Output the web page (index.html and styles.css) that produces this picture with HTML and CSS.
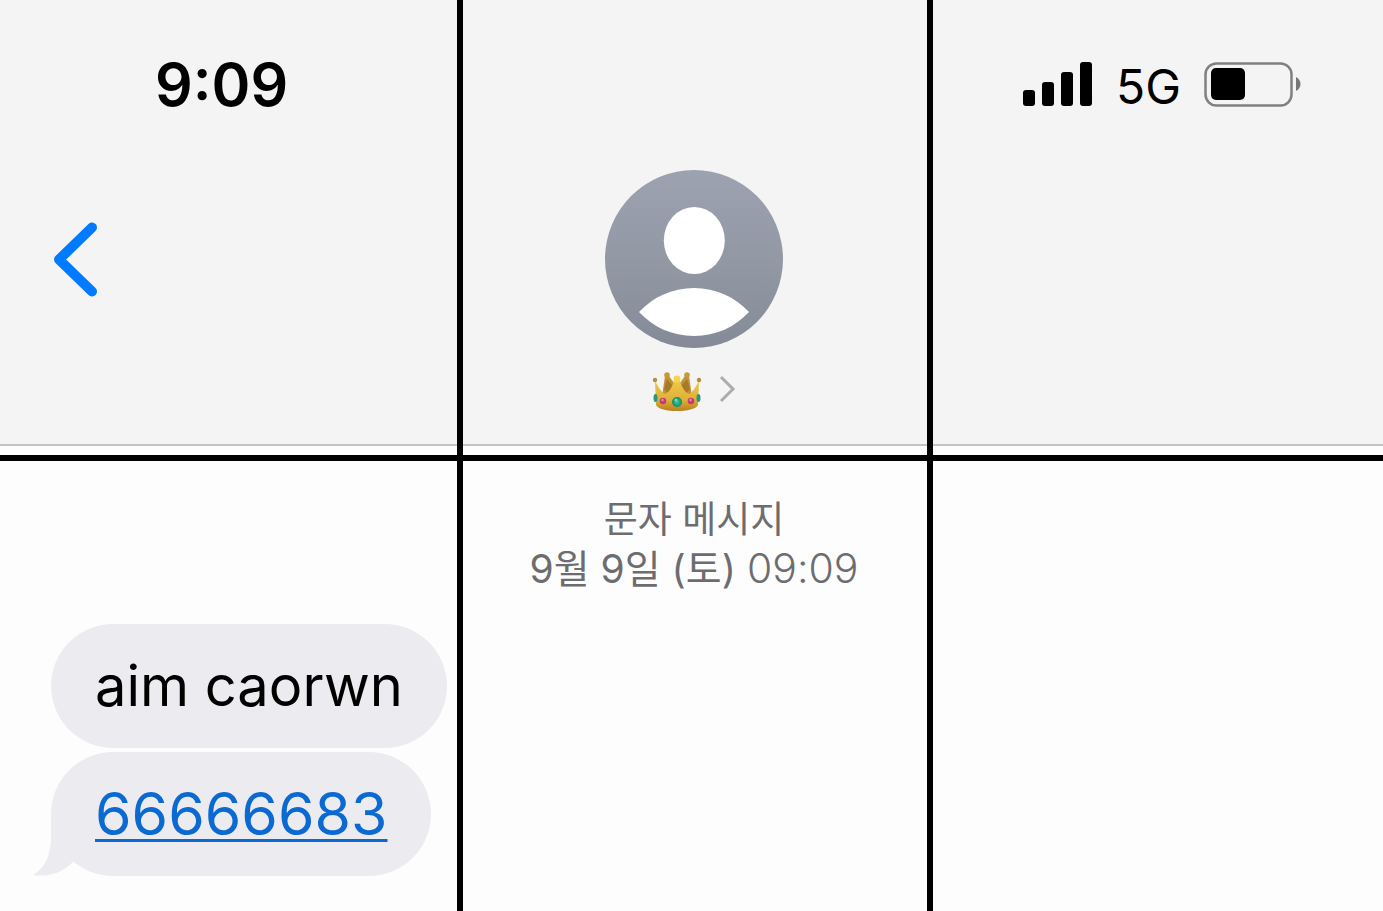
FILE: index.html
```html
<!DOCTYPE html>
<html lang="ko">
<head>
<meta charset="utf-8">
<meta name="viewport" content="width=device-width, initial-scale=1">
<title>문자 메시지</title>
<link rel="stylesheet" href="styles.css">
</head>
<body>
<main class="grid">
  <section class="cell cell-top">
    <div class="bar bar-left">
      <time class="clock">9:09</time>
      <button class="back" type="button" aria-label="뒤로">
        <svg width="46" height="76" viewBox="0 0 46 76" aria-hidden="true"><path d="M40 6.500L7 38.500L40 70.500" fill="none" stroke="#007aff" stroke-width="10" stroke-linecap="round" stroke-linejoin="round"/></svg>
      </button>
    </div>
  </section>

  <section class="cell cell-top">
    <div class="bar bar-center">
      <svg class="avatar" width="178" height="178" viewBox="0 0 178 178" aria-hidden="true">
        <defs><linearGradient id="av" x1="0" y1="0" x2="0" y2="1"><stop offset="0" stop-color="#9da2b1"/><stop offset=".5" stop-color="#9298a4"/><stop offset=".8" stop-color="#8a919c"/><stop offset="1" stop-color="#858998"/></linearGradient></defs>
        <circle cx="89" cy="89" r="89" fill="url(#av)"/>
        <ellipse cx="89.300" cy="70.500" rx="30.500" ry="33.500" fill="#fff"/>
        <path d="M34 142C48 127 67 118 89 118C111 118 130 127 144 142C130 157 111 166 89 166C67 166 48 157 34 142Z" fill="#fff"/>
      </svg>
      <button class="contact" type="button" aria-label="연락처 정보">
        <svg width="50" height="42" viewBox="0 0 50 42" aria-hidden="true">
          <defs>
            <linearGradient id="gold" x1="0" y1="0" x2="0" y2="1"><stop offset="0" stop-color="#f0cb45"/><stop offset=".65" stop-color="#dfb03a"/><stop offset="1" stop-color="#b8801f"/></linearGradient>
            <radialGradient id="green"><stop offset="0" stop-color="#43c79a"/><stop offset="1" stop-color="#11895f"/></radialGradient>
          </defs>
          <path d="M9 32L13 5H17L25 16L33 5H37L41 32Z" fill="#c2943a"/>
          <path d="M12 18L15 8L22 16L17 24Z M38 18L35 8L28 16L33 24Z" fill="#a87a28"/>
          <circle cx="15" cy="4" r="2.800" fill="#c79a38"/><circle cx="35" cy="4" r="2.800" fill="#c79a38"/>
          <path d="M3 10C7 17 10 22 13 23C18 21 21 14 23 8H27C29 14 32 21 37 23C40 22 43 17 47 10L46 34C44 38 35 40 25 40C15 40 6 38 4 34Z" fill="url(#gold)"/>
          <circle cx="3" cy="9" r="2.200" fill="#bb8d35"/><circle cx="47" cy="9" r="2.200" fill="#bb8d35"/>
          <circle cx="25" cy="8" r="3.400" fill="#f5d44a"/>
          <ellipse cx="3.500" cy="27" rx="2" ry="4" fill="#249c72"/><ellipse cx="46.500" cy="27" rx="2" ry="4" fill="#249c72"/>
          <circle cx="11" cy="30" r="3.300" fill="#c43b72"/><circle cx="39" cy="30" r="3.300" fill="#c43b72"/>
          <circle cx="10.500" cy="29" r="1.200" fill="#ef8caf"/><circle cx="38.500" cy="29" r="1.200" fill="#ef8caf"/>
          <circle cx="25" cy="31" r="5" fill="url(#green)"/><circle cx="24" cy="29" r="1.500" fill="#79dbbb"/>
        </svg>
        <svg width="18" height="34" viewBox="0 0 18 34" aria-hidden="true"><path d="M3 2L15 14L3 26" fill="none" stroke="#acacae" stroke-width="3"/></svg>
      </button>
    </div>
  </section>

  <section class="cell cell-top">
    <div class="bar bar-right">
      <svg width="70" height="44" viewBox="0 0 70 44" role="img" aria-label="신호"><rect x="0" y="28" width="12" height="16" rx="3"/><rect x="19" y="20" width="12" height="24" rx="3"/><rect x="38" y="10" width="12" height="34" rx="3"/><rect x="57" y="0" width="12" height="44" rx="3"/></svg>
      <span class="network">5G</span>
      <svg width="98" height="46" viewBox="0 0 98 46" role="img" aria-label="배터리"><rect x="1.500" y="1.500" width="86" height="42" rx="11" fill="none" stroke="#808080" stroke-width="2.500"/><rect x="7" y="6" width="34" height="32" rx="5"/><path d="M92 15C98 18 98 26 92 29Z" fill="#777"/></svg>
    </div>
  </section>

  <section class="cell chat">
    <p class="bubble">aim caorwn</p>
    <p class="bubble bubble-last"><a class="number" href="tel:66666683">66666683</a>
      <svg class="tail" width="60" height="64" viewBox="0 0 60 64" aria-hidden="true"><path d="M18 0V22C18 43 13 55 0 63C14 65 28 62 40 50L60 0Z" fill="#ecebf0"/></svg>
    </p>
  </section>

  <section class="cell stamp">
    <p>문자 메시지</p>
    <p class="date">9월 9일 (토) <span class="hour">09:09</span></p>
  </section>

  <section class="cell"></section>
</main>
</body>
</html>
```
FILE: styles.css
```css
* {
  box-sizing: border-box;
}

body {
  margin: 0;
  color: #000;
  font-family: Inter, "Noto Sans CJK KR", sans-serif;
}

p {
  margin: 0;
}

svg {
  display: block;
  flex: none;
}

button {
  padding: 0;
  border: 0;
  background: none;
  cursor: pointer;
}

.grid {
  display: grid;
  grid-template-columns: 457fr 464fr 450fr;
  grid-template-rows: 455fr 450fr;
  gap: 6px;
  min-height: 100vh;
  background: #000;
}

.cell {
  min-width: 0;
  background: #fefdfe;
}

.cell-top {
  display: flex;
  flex-direction: column;
  padding-bottom: 9px;
}

.bar {
  display: flex;
  flex: 1;
  border-bottom: 2px solid #c4c2c4;
  background: #f4f4f4;
}

.bar-left {
  flex-direction: column;
  align-items: flex-start;
  gap: 100px;
  padding: 49px 0 0 52px;
}

.clock {
  margin-left: 103px;
  font-size: 59px;
  font-weight: 600;
  line-height: 72px;
}

.bar-center {
  flex-direction: column;
  align-items: center;
  gap: 23px;
  padding: 170px 2px 0 0;
}

.contact {
  display: flex;
  align-items: center;
  gap: 16px;
}

.bar-right {
  justify-content: flex-end;
  align-items: flex-start;
  gap: 23px;
  padding: 62px 81px 0 0;
}

.network {
  font-size: 48px;
  line-height: 50px;
}

.chat {
  display: flex;
  flex-direction: column;
  align-items: flex-start;
  gap: 4px;
  padding: 163px 10px 34px 51px;
}

.bubble {
  position: relative;
  padding: 26px 44px;
  border-radius: 62px;
  background: #ecebf0;
  font-size: 56px;
  line-height: 72px;
  white-space: nowrap;
}

.bubble-last {
  font-size: 59px;
}

.number {
  color: #0b69d2;
  text-decoration-thickness: 3px;
  text-underline-offset: 4px;
}

.tail {
  position: absolute;
  bottom: 0;
  left: -18px;
}

.stamp {
  padding: 35px 2px 0 0;
  color: #6d6d70;
  font-size: 37px;
  line-height: 48px;
  text-align: center;
}

.date {
  font-size: 39px;
}

.hour {
  font-size: 41px;
  font-weight: 300;
}
```
